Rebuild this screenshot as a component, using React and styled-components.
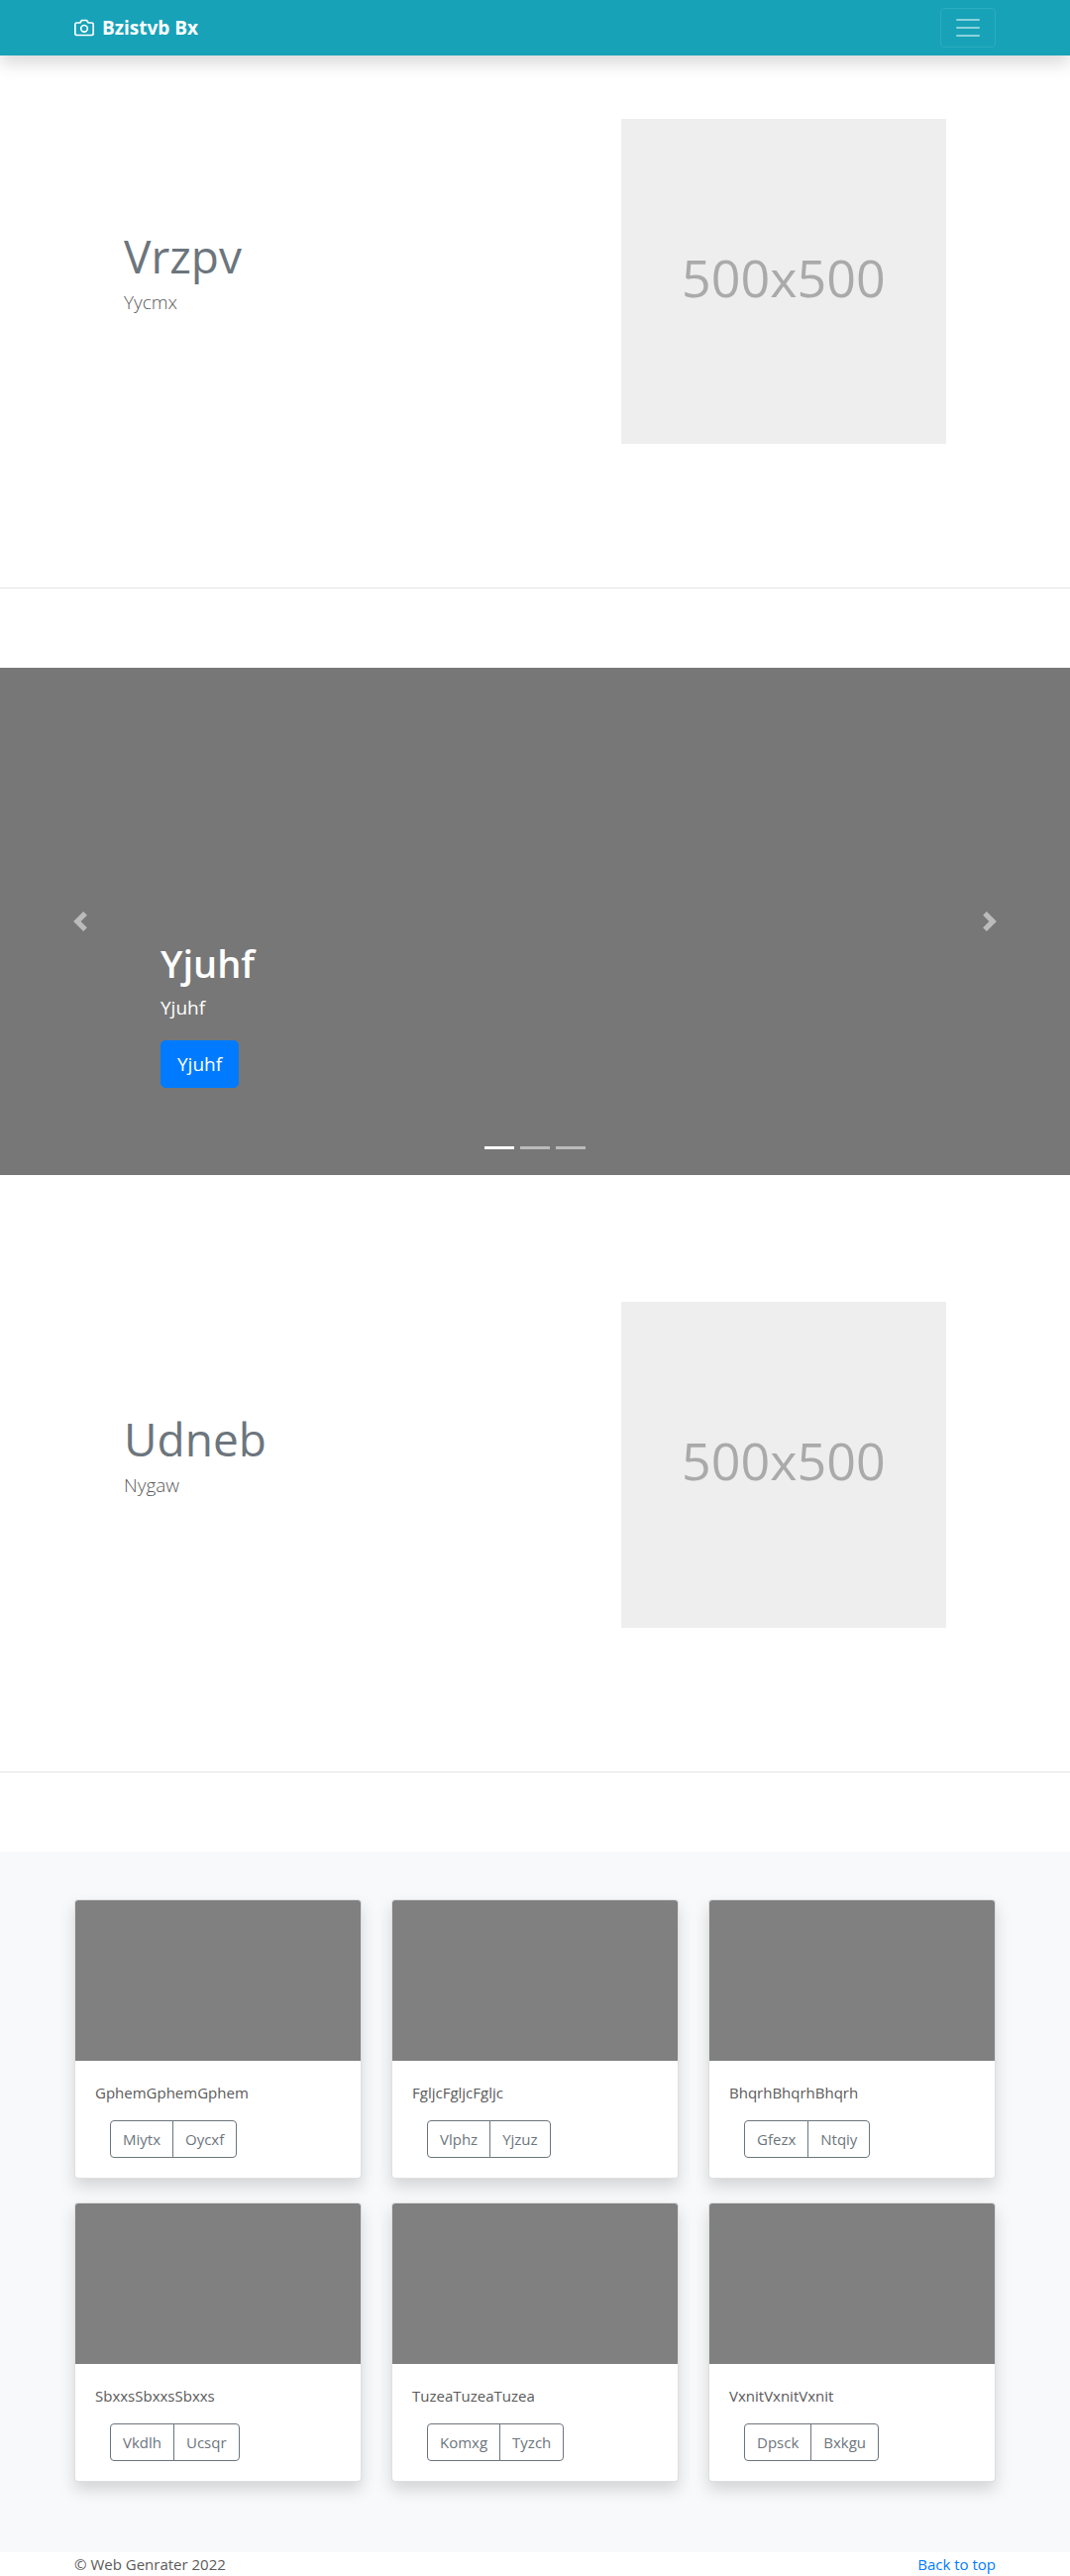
import React from "react";
import styled, { createGlobalStyle } from "styled-components";

const GlobalStyle = createGlobalStyle`
  *, *::before, *::after { box-sizing: border-box; }
  body {
    margin: 0;
    background: #fff;
    color: #5a5a5a;
    font-family: "Open Sans", "Noto Sans", sans-serif;
    font-size: 15px;
    line-height: 24px;
  }
  h1, h2, p { margin: 0; }
  button { font-family: inherit; cursor: pointer; }
`;

const Container = styled.div`
  width: 100%;
  max-width: 960px;
  margin: 0 auto;
  padding: 0 15px;
`;

const Header = styled.header`
  position: relative;
  background: #17a2b8;
  padding: 8px 0;
  box-shadow: 0 8px 16px rgba(0, 0, 0, 0.15);
`;

const Bar = styled(Container)`
  display: flex;
  align-items: center;
  justify-content: space-between;
`;

const Brand = styled.a`
  display: flex;
  align-items: center;
  gap: 8px;
  color: #fff;
  font-size: 19px;
  font-weight: 700;
  text-decoration: none;
`;

const Toggler = styled.button`
  display: flex;
  padding: 4px 12px;
  background: transparent;
  border: 1px solid rgba(255, 255, 255, 0.1);
  border-radius: 4px;
`;

const Featurette = styled.section`
  padding-top: ${(p) => (p.$first ? 64 : 128)}px;
`;

const FeatureRow = styled.div`
  display: grid;
  grid-template-columns: 7fr 5fr;
  max-width: 860px;
  margin: 0 auto;
`;

const FeatureText = styled.div`
  padding: 112px 15px 0;
`;

const FeatureTitle = styled.h2`
  margin-bottom: 6px;
  color: #6c757d;
  font-size: 46px;
  font-weight: 400;
  line-height: 52px;
`;

const Lead = styled.p`
  font-size: 19px;
  font-weight: 300;
  line-height: 30px;
`;

const FeatureMedia = styled.div`
  padding: 0 15px;
`;

const Placeholder = styled.div`
  display: flex;
  align-items: center;
  justify-content: center;
  aspect-ratio: 1;
  padding-bottom: 8px;
  background: #eee;
  color: #aaa;
  font-size: 52px;
`;

const Divider = styled.hr`
  margin: 145px 0 80px;
  border: 0;
  border-top: 1px solid rgba(0, 0, 0, 0.1);
`;

const Carousel = styled.section`
  position: relative;
  display: flex;
  flex-direction: column;
  justify-content: flex-end;
  align-items: flex-start;
  min-height: 512px;
  padding: 0 15% 88px;
  background: #777;
  color: #fff;
`;

const SlideTitle = styled.h1`
  margin-bottom: 6px;
  font-size: 38px;
  font-weight: 600;
  line-height: 48px;
`;

const SlideText = styled.p`
  margin-bottom: 18px;
  font-size: 19px;
  font-weight: 500;
  line-height: 30px;
`;

const SlideButton = styled.button`
  padding: 8px 16px;
  border: 1px solid #007bff;
  border-radius: 5px;
  background: #007bff;
  color: #fff;
  font-size: 19px;
  font-weight: 500;
  line-height: 30px;
`;

const SlideControl = styled.button`
  position: absolute;
  top: 0;
  bottom: 0;
  ${(p) => p.$side}: 0;
  display: flex;
  align-items: center;
  justify-content: center;
  width: 15%;
  padding: 0;
  border: 0;
  background: transparent;
  opacity: 0.5;
`;

const Indicators = styled.div`
  position: absolute;
  left: 15%;
  right: 15%;
  bottom: 16px;
  display: flex;
  justify-content: center;
  gap: 6px;
`;

const Indicator = styled.button`
  width: 30px;
  height: 23px;
  padding: 0;
  border: solid transparent;
  border-width: 10px 0;
  background: #fff;
  background-clip: padding-box;
  opacity: ${(p) => (p.$active ? 1 : 0.5)};
`;

const Album = styled.section`
  padding: 48px 0 71px;
  background: #f8f9fa;
`;

const CardGrid = styled(Container)`
  display: grid;
  grid-template-columns: repeat(3, 1fr);
  gap: 24px 30px;
`;

const Card = styled.article`
  overflow: hidden;
  border: 1px solid rgba(0, 0, 0, 0.125);
  border-radius: 4px;
  background: #fff;
  box-shadow: 0 8px 16px rgba(0, 0, 0, 0.15);
`;

const CardMedia = styled.div`
  height: 162px;
  background: gray;
`;

const CardBody = styled.div`
  display: flex;
  flex-direction: column;
  gap: 16px;
  padding: 20px;
`;

const ButtonGroup = styled.div`
  display: flex;
  padding-left: 15px;
`;

const GroupButton = styled.button`
  padding: 6px 12px;
  border: 1px solid #6c757d;
  background: transparent;
  color: #6c757d;
  font-size: 15px;
  line-height: 24px;

  &:first-child { border-radius: 4px 0 0 4px; }
  &:last-child { margin-left: -1px; border-radius: 0 4px 4px 0; }
`;

const FooterBar = styled(Container)`
  display: flex;
  justify-content: space-between;
`;

const FooterLink = styled.a`
  color: #007bff;
  text-decoration: none;
`;

const cards = [
  { title: "GphemGphemGphem", actions: ["Miytx", "Oycxf"] },
  { title: "FgljcFgljcFgljc", actions: ["Vlphz", "Yjzuz"] },
  { title: "BhqrhBhqrhBhqrh", actions: ["Gfezx", "Ntqiy"] },
  { title: "SbxxsSbxxsSbxxs", actions: ["Vkdlh", "Ucsqr"] },
  { title: "TuzeaTuzeaTuzea", actions: ["Komxg", "Tyzch"] },
  { title: "VxnitVxnitVxnit", actions: ["Dpsck", "Bxkgu"] },
];

function CameraIcon() {
  return (
    <svg width="20" height="20" viewBox="0 0 24 24" fill="none" stroke="#fff" strokeWidth="2" strokeLinecap="round" strokeLinejoin="round" aria-hidden="true">
      <path d="M23 19a2 2 0 0 1-2 2H3a2 2 0 0 1-2-2V8a2 2 0 0 1 2-2h4l2-3h6l2 3h4a2 2 0 0 1 2 2z" />
      <circle cx="12" cy="13" r="4" />
    </svg>
  );
}

function MenuIcon() {
  return (
    <svg width="30" height="30" viewBox="0 0 30 30" fill="none" stroke="rgba(255,255,255,0.5)" strokeWidth="2" strokeLinecap="round" aria-hidden="true">
      <path d="M4 7h22M4 15h22M4 23h22" />
    </svg>
  );
}

function Chevron({ d }) {
  return (
    <svg width="20" height="20" viewBox="0 0 8 8" fill="#fff" aria-hidden="true">
      <path d={d} />
    </svg>
  );
}

function Feature({ title, text, first }) {
  return (
    <Featurette $first={first}>
      <FeatureRow>
        <FeatureText>
          <FeatureTitle>{title}</FeatureTitle>
          <Lead>{text}</Lead>
        </FeatureText>
        <FeatureMedia>
          <Placeholder>500x500</Placeholder>
        </FeatureMedia>
      </FeatureRow>
      <Divider />
    </Featurette>
  );
}

export default function App() {
  return (
    <>
      <GlobalStyle />
      <Header id="top">
        <Bar>
          <Brand href="#top">
            <CameraIcon />
            Bzistvb Bx
          </Brand>
          <Toggler type="button" aria-label="Toggle navigation">
            <MenuIcon />
          </Toggler>
        </Bar>
      </Header>
      <main>
        <Feature first title="Vrzpv" text="Yycmx" />
        <Carousel>
          <SlideTitle>Yjuhf</SlideTitle>
          <SlideText>Yjuhf</SlideText>
          <SlideButton type="button">Yjuhf</SlideButton>
          <SlideControl type="button" $side="left" aria-label="Previous">
            <Chevron d="M5.25 0l-4 4 4 4 1.5-1.5L4.25 4l2.5-2.5L5.25 0z" />
          </SlideControl>
          <SlideControl type="button" $side="right" aria-label="Next">
            <Chevron d="M2.75 0l-1.5 1.5L3.75 4l-2.5 2.5L2.75 8l4-4-4-4z" />
          </SlideControl>
          <Indicators>
            {[0, 1, 2].map((i) => (
              <Indicator key={i} type="button" $active={i === 0} aria-label={`Slide ${i + 1}`} />
            ))}
          </Indicators>
        </Carousel>
        <Feature title="Udneb" text="Nygaw" />
        <Album>
          <CardGrid>
            {cards.map((card) => (
              <Card key={card.title}>
                <CardMedia />
                <CardBody>
                  <p>{card.title}</p>
                  <ButtonGroup>
                    {card.actions.map((label) => (
                      <GroupButton key={label} type="button">{label}</GroupButton>
                    ))}
                  </ButtonGroup>
                </CardBody>
              </Card>
            ))}
          </CardGrid>
        </Album>
      </main>
      <footer>
        <FooterBar>
          <span>© Web Genrater 2022</span>
          <FooterLink href="#top">Back to top</FooterLink>
        </FooterBar>
      </footer>
    </>
  );
}
